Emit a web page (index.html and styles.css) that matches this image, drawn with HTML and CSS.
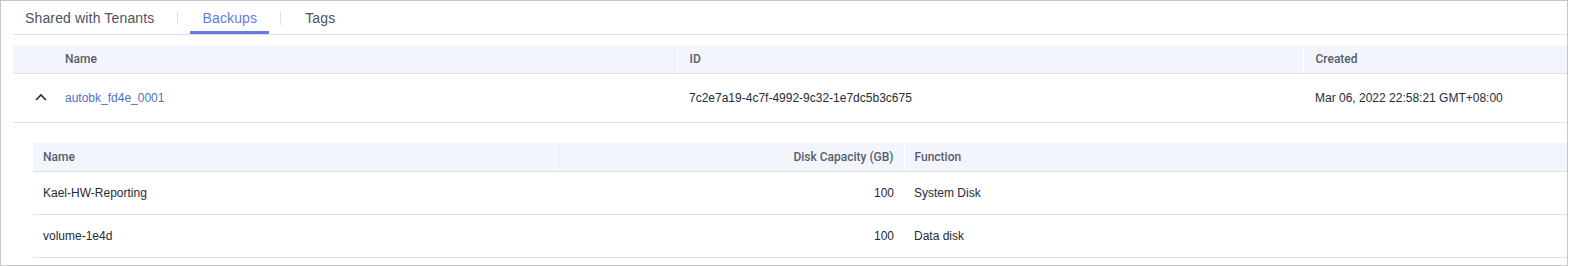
FILE: index.html
```html
<html lang="en"><head>
	<meta charset="UTF-8">
	<title>Backups</title>
	<link rel="stylesheet" href="styles.css">
</head>
<body>
	<div class="frame">
		<div class="tabs">
			<span class="tab">Shared with Tenants</span>
			<span class="divider"></span>
			<span class="tab active">Backups</span>
			<span class="divider"></span>
			<span class="tab">Tags</span>
		</div>
		<table class="grid">
			<colgroup>
				<col style="width:40px">
				<col style="width:624px">
				<col style="width:626px">
				<col style="width:420px">
			</colgroup>
			<thead>
				<tr>
					<th class="expand"></th>
					<th class="first">Name</th>
					<th>ID</th>
					<th>Created</th>
				</tr>
			</thead>
			<tbody>
				<tr class="main-row">
					<td class="expand">
						<svg class="chevron" width="12" height="8" viewBox="0 0 12 8"><polyline points="1,7 6,2 11,7" fill="none" stroke="#252b3a" stroke-width="1.6"/></svg>
					</td>
					<td><a class="link" href="#">autobk_fd4e_0001</a></td>
					<td>7c2e7a19-4c7f-4992-9c32-1e7dc5b3c675</td>
					<td>Mar 06, 2022 22:58:21 GMT+08:00</td>
				</tr>
				<tr class="detail-row">
					<td colspan="4" class="detail">
						<table class="sub">
							<colgroup>
								<col style="width:522px">
								<col style="width:349px">
								<col style="width:800px">
							</colgroup>
							<thead>
								<tr>
									<th class="first">Name</th>
									<th class="num">Disk Capacity (GB)</th>
									<th>Function</th>
								</tr>
							</thead>
							<tbody>
								<tr>
									<td>Kael-HW-Reporting</td>
									<td class="num">100</td>
									<td>System Disk</td>
								</tr>
								<tr>
									<td>volume-1e4d</td>
									<td class="num">100</td>
									<td>Data disk</td>
								</tr>
							</tbody>
						</table>
					</td>
				</tr>
			</tbody>
		</table>
	</div>
</body></html>
```

FILE: styles.css
```css
body {
	margin: 0;
	font-family: 'Liberation Sans', Arial, sans-serif;
	background: #fff;
	color: #252b3a;
}

.frame {
	box-sizing: border-box;
	width: 1568px;
	height: 266px;
	border: 1px solid #c6c6c6;
	overflow: hidden;
	padding-left: 12px;
}

.tabs {
	display: flex;
	align-items: center;
	border-bottom: 1px solid #dfe1e6;
	margin-right: -20px;
}
.tabs .tab {
	font-size: 14px;
	letter-spacing: 0.15px;
	line-height: 20px;
	color: #4d5260;
	padding: 7px 12px 3px;
	border-bottom: 3px solid transparent;
}
.tabs .tab.active {
	color: #5e7ce0;
	border-bottom-color: #5e7ce0;
}
.tabs .divider {
	width: 1px;
	height: 14px;
	background: #dfe1e6;
	margin: 0 12px 0 11px;
}

table {
	border-collapse: collapse;
	table-layout: fixed;
}

.grid {
	margin-top: 10px;
	width: 1710px;
}

th {
	background: #f2f5fc;
	color: #575d6c;
	font-family: Roboto, 'Liberation Sans', sans-serif;
	font-size: 12px;
	font-weight: 500;
	text-align: left;
	height: 28px;
	padding: 0 12px;
	border-left: 1px solid #fff;
	border-bottom: 1px solid #dfe1e6;
}
th.first,
th.expand {
	border-left: none;
}

td {
	font-size: 12px;
	padding: 0 12px;
	border-bottom: 1px solid #dfe1e6;
	white-space: nowrap;
}

.main-row td {
	height: 49px;
}
.grid td.expand {
	padding: 0 0 0 22px;
}
.chevron {
	display: block;
	margin-top: -1px;
}

.link {
	color: #526ecc;
	text-decoration: none;
}

.grid td.detail {
	padding: 20px 0 20px 20px;
	border-bottom: none;
}

.sub {
	width: 1671px;
}
.sub th,
.sub td {
	padding: 0 10px;
}
.sub th {
	height: 29px;
}
.sub td {
	height: 43px;
}
.sub .num {
	text-align: right;
}
```
